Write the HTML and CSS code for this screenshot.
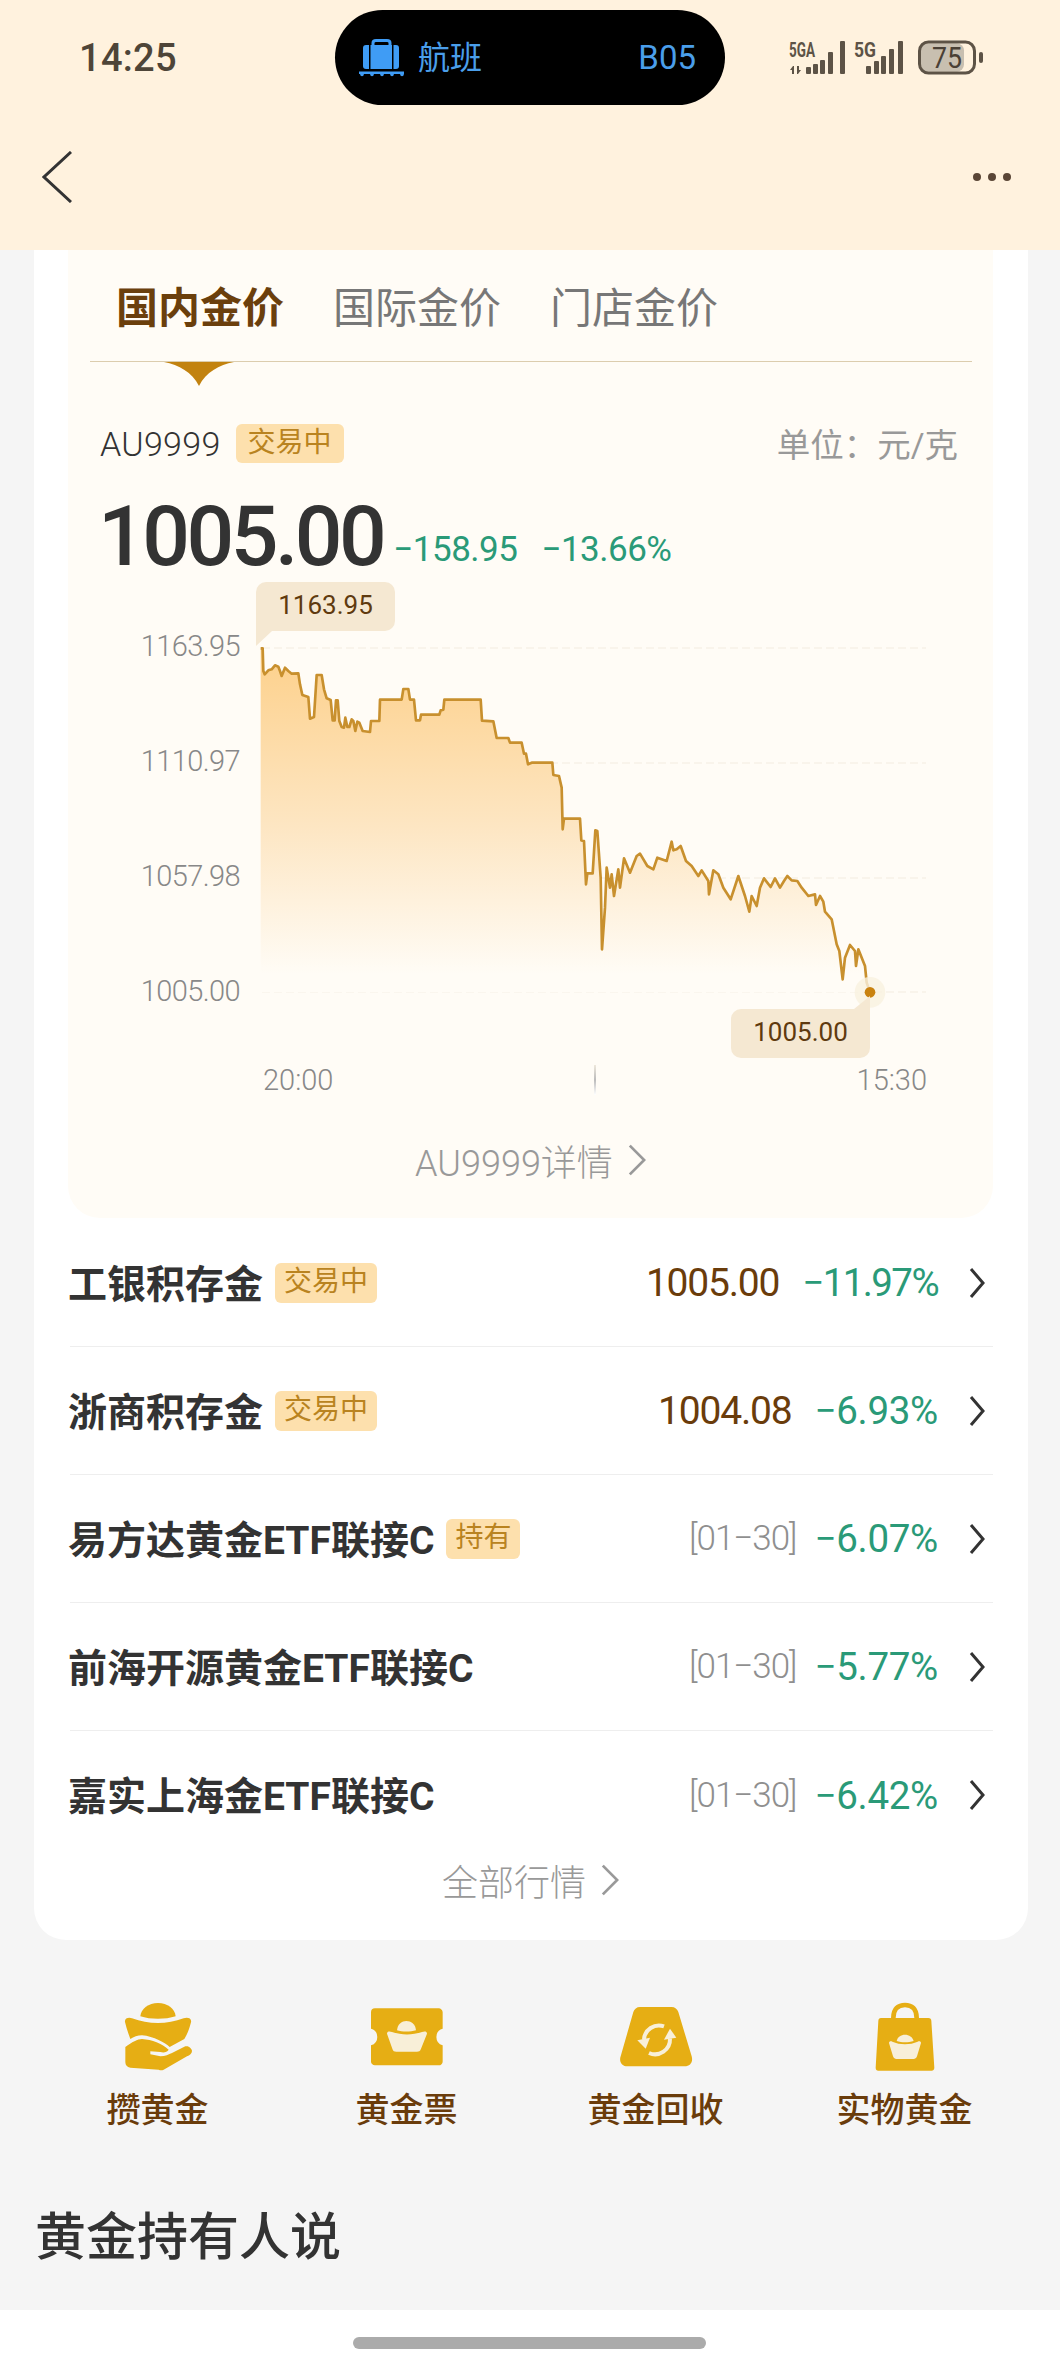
FILE: index.html
```html
<!DOCTYPE html>
<html lang="zh-CN">
<head>
    <meta charset="UTF-8">
    <meta name="viewport" content="width=device-width, initial-scale=1.0">
    <title>黄金行情</title>
    <link rel="stylesheet" href="styles.css">
</head>

<body>
    <header class="top">
        <div class="status">
            <span class="time">14:25</span>
            <div class="pill">
                <svg class="bag-icon" viewBox="356 34 52 44" width="52" height="44">
                    <path d="M373 44V41Q373 38.500 376 38.500H387Q390 38.500 390 41V44" fill="none" stroke="#3f9cf5" stroke-width="3"/>
                    <rect x="363" y="43" width="36" height="24" rx="3" fill="#3f9cf5"/>
                    <rect x="369" y="43" width="1.500" height="24" fill="#000"/>
                    <rect x="392" y="43" width="1.500" height="24" fill="#000"/>
                    <rect x="359" y="69.500" width="45" height="2.500" fill="#3f9cf5"/>
                    <g fill="#3f9cf5">
                        <circle cx="362" cy="72.500" r="1.800"/>
                        <circle cx="372" cy="72.500" r="1.800"/>
                        <circle cx="382" cy="72.500" r="1.800"/>
                        <circle cx="392" cy="72.500" r="1.800"/>
                        <circle cx="402" cy="72.500" r="1.800"/>
                    </g>
                </svg>
                <span class="flight">航班</span>
                <span class="gate">B05</span>
            </div>
            <svg class="status-icons" viewBox="789 38 196 40" width="196" height="40">
                <g fill="#5d5346">
                    <text class="net" x="789" y="57" textLength="26" lengthAdjust="spacingAndGlyphs">5GA</text>
                    <path d="M793 66l-3 4h2v4h2v-8zM798 74l3-4h-2v-4h-2v8z"/>
                    <rect x="806" y="67" width="5" height="7" rx="1"/>
                    <rect x="813" y="64" width="5" height="10" rx="1"/>
                    <rect x="820" y="60" width="5" height="14" rx="1"/>
                    <rect x="828" y="52" width="5" height="22" rx="1"/>
                    <rect x="840" y="41" width="5" height="33" rx="1"/>
                    <text class="net" x="854" y="57" textLength="22" lengthAdjust="spacingAndGlyphs">5G</text>
                    <rect x="866" y="66" width="5" height="8" rx="1"/>
                    <rect x="874" y="61" width="5" height="13" rx="1"/>
                    <rect x="881" y="56" width="5" height="18" rx="1"/>
                    <rect x="889" y="49" width="5" height="25" rx="1"/>
                    <rect x="898" y="41" width="5" height="33" rx="1"/>
                    <rect x="979" y="52" width="4" height="11" rx="2"/>
                </g>
                <rect x="921" y="43.500" width="43" height="28" rx="7" fill="#c8bfb0"/>
                <rect x="919.500" y="42" width="55" height="31" rx="9" fill="none" stroke="#5d5346" stroke-width="3"/>
                <text class="battery" x="932" y="68" textLength="30" lengthAdjust="spacingAndGlyphs">75</text>
            </svg>
        </div>
        <div class="nav">
            <svg viewBox="0 0 30 52" width="30" height="52">
                <path d="M29 1L2 26L29 51" fill="none" stroke="#333" stroke-width="3"/>
            </svg>
            <div class="dots"><i></i><i></i><i></i></div>
        </div>
    </header>

    <main class="card">
        <section class="panel">
            <div class="tabs">
                <span class="tab active">国内金价</span>
                <span class="tab">国际金价</span>
                <span class="tab">门店金价</span>
            </div>
            <svg class="tab-mark" viewBox="0 0 70 24" width="70" height="24">
                <path d="M0 0H70C55 3 42 10 35 24C28 10 15 3 0 0Z" fill="#c2820f"/>
            </svg>

            <div class="info">
                <span class="code">AU9999</span>
                <span class="badge">交易中</span>
                <span class="unit">单位：元/克</span>
            </div>

            <div class="price-line">
                <span class="price">1005.00</span>
                <span class="change">−158.95</span>
                <span class="change second">−13.66%</span>
            </div>

            <div class="chart">
                <div class="y-labels">
                    <span>1163.95</span>
                    <span>1110.97</span>
                    <span>1057.98</span>
                    <span>1005.00</span>
                </div>
                <svg class="plot" viewBox="60 30 2010 1140" width="670" height="380">
                    <defs>
                        <linearGradient id="area" gradientUnits="userSpaceOnUse" x1="0" y1="80" x2="0" y2="1060">
                            <stop offset="0" stop-color="#fdd08a"/>
                            <stop offset="0.55" stop-color="#fde6c3"/>
                            <stop offset="1" stop-color="#fffcf6"/>
                        </linearGradient>
                    </defs>
                    <g stroke="#f3ece0" stroke-width="3" stroke-dasharray="24 12">
                        <path d="M66 81H2058"/>
                        <path d="M66 426H2058"/>
                        <path d="M66 771H2058"/>
                        <path d="M66 1113H2058"/>
                    </g>
                    <path fill="url(#area)" d="M62 82L68 82L70 150L74 160L85 148L95 145L105 133L115 137L120 150L125 165L135 140L145 150L155 158L175 157L180 190L187 222L205 228L210 293L222 288L230 162L245 162L252 205L260 232L272 237L278 298L284 298L288 238L293 238L298 300L305 318L312 320L316 290L322 318L328 318L335 295L340 300L346 330L352 302L358 305L368 330L390 333L393 300L418 300L420 236L485 236L490 204L505 204L510 236L522 236L528 298L540 298L543 281L598 281L602 268L610 266L613 236L722 236L726 299L760 301L770 351L805 351L810 365L845 365L852 398L858 398L864 430L875 425L937 425L940 462L957 465L965 500L968 625L972 593L1020 593L1024 658L1032 660L1038 790L1042 757L1058 757L1066 628L1072 630L1082 770L1086 985L1095 860L1100 740L1110 800L1115 760L1122 825L1135 745L1140 800L1152 712L1170 755L1190 705L1200 698L1222 735L1240 745L1252 710L1280 720L1295 662L1300 688L1310 685L1322 675L1338 720L1355 735L1375 765L1385 748L1405 780L1407 820L1420 748L1435 760L1450 800L1472 835L1495 765L1515 825L1528 872L1535 825L1550 855L1560 800L1572 772L1592 798L1605 772L1620 800L1632 780L1642 765L1655 778L1672 780L1685 800L1705 825L1725 820L1728 852L1740 825L1750 842L1755 872L1775 895L1790 970L1798 990L1808 1075L1815 1010L1830 972L1845 990L1848 1035L1855 985L1875 1035L1880 1085L1890 1114L62 1114Z"/>
                    <path fill="none" stroke="#c8902e" stroke-width="8" stroke-linejoin="round" d="M62 82L68 82L70 150L74 160L85 148L95 145L105 133L115 137L120 150L125 165L135 140L145 150L155 158L175 157L180 190L187 222L205 228L210 293L222 288L230 162L245 162L252 205L260 232L272 237L278 298L284 298L288 238L293 238L298 300L305 318L312 320L316 290L322 318L328 318L335 295L340 300L346 330L352 302L358 305L368 330L390 333L393 300L418 300L420 236L485 236L490 204L505 204L510 236L522 236L528 298L540 298L543 281L598 281L602 268L610 266L613 236L722 236L726 299L760 301L770 351L805 351L810 365L845 365L852 398L858 398L864 430L875 425L937 425L940 462L957 465L965 500L968 625L972 593L1020 593L1024 658L1032 660L1038 790L1042 757L1058 757L1066 628L1072 630L1082 770L1086 985L1095 860L1100 740L1110 800L1115 760L1122 825L1135 745L1140 800L1152 712L1170 755L1190 705L1200 698L1222 735L1240 745L1252 710L1280 720L1295 662L1300 688L1310 685L1322 675L1338 720L1355 735L1375 765L1385 748L1405 780L1407 820L1420 748L1435 760L1450 800L1472 835L1495 765L1515 825L1528 872L1535 825L1550 855L1560 800L1572 772L1592 798L1605 772L1620 800L1632 780L1642 765L1655 778L1672 780L1685 800L1705 825L1725 820L1728 852L1740 825L1750 842L1755 872L1775 895L1790 970L1798 990L1808 1075L1815 1010L1830 972L1845 990L1848 1035L1855 985L1875 1035L1880 1085L1890 1114"/>
                    <circle cx="1890" cy="1114" r="46" fill="#f9f1e0" fill-opacity="0.8"/>
                    <circle cx="1890" cy="1114" r="16" fill="#c9820f"/>
                </svg>
                <span class="tip tip-high">1163.95</span>
                <span class="tip tip-low">1005.00</span>
            </div>

            <div class="x-labels">
                <span>20:00</span>
                <i class="x-mark"></i>
                <span>15:30</span>
            </div>

            <a class="more detail">AU9999详情
                <svg viewBox="0 0 20 34" width="18" height="34"><path d="M2 1L18 17L2 33" fill="none" stroke="#999" stroke-width="3"/></svg>
            </a>
        </section>

        <ul class="list">
            <li class="row">
                <span class="name">工银积存金</span>
                <span class="badge">交易中</span>
                <span class="value">1005.00</span>
                <span class="pct tight">−11.97%</span>
                <svg class="arrow" viewBox="0 0 16 30" width="16" height="30"><path d="M2 1L14 15L2 29" fill="none" stroke="#333" stroke-width="3"/></svg>
            </li>
            <li class="row">
                <span class="name">浙商积存金</span>
                <span class="badge">交易中</span>
                <span class="value">1004.08</span>
                <span class="pct">−6.93%</span>
                <svg class="arrow" viewBox="0 0 16 30" width="16" height="30"><path d="M2 1L14 15L2 29" fill="none" stroke="#333" stroke-width="3"/></svg>
            </li>
            <li class="row">
                <span class="name">易方达黄金ETF联接C</span>
                <span class="badge">持有</span>
                <span class="date">[01−30]</span>
                <span class="pct">−6.07%</span>
                <svg class="arrow" viewBox="0 0 16 30" width="16" height="30"><path d="M2 1L14 15L2 29" fill="none" stroke="#333" stroke-width="3"/></svg>
            </li>
            <li class="row">
                <span class="name">前海开源黄金ETF联接C</span>
                <span class="date">[01−30]</span>
                <span class="pct">−5.77%</span>
                <svg class="arrow" viewBox="0 0 16 30" width="16" height="30"><path d="M2 1L14 15L2 29" fill="none" stroke="#333" stroke-width="3"/></svg>
            </li>
            <li class="row">
                <span class="name">嘉实上海金ETF联接C</span>
                <span class="date">[01−30]</span>
                <span class="pct">−6.42%</span>
                <svg class="arrow" viewBox="0 0 16 30" width="16" height="30"><path d="M2 1L14 15L2 29" fill="none" stroke="#333" stroke-width="3"/></svg>
            </li>
        </ul>

        <a class="more all">全部行情
            <svg viewBox="0 0 20 34" width="18" height="34"><path d="M2 1L18 17L2 33" fill="none" stroke="#999" stroke-width="3"/></svg>
        </a>
    </main>

    <nav class="shortcuts">
        <a class="shortcut">
            <svg viewBox="53 62 240 210" width="80" height="70">
                <g fill="#e6ae14">
                    <path d="M120 108C122 85 145 68 173 68C201 68 224 85 226 108C195 118 150 118 120 108Z"/>
                    <path d="M74 125C72 114 85 110 95 114C145 133 200 133 250 114C262 110 275 114 272 126C268 142 262 160 252 176L208 200C195 188 160 168 125 165C112 165 100 170 90 176C84 160 78 142 74 125Z"/>
                    <path d="M75 200C95 185 112 176 125 176C155 178 185 190 205 208C200 216 190 218 180 215L150 213L150 222L180 228C195 228 205 222 215 218L255 198C265 195 275 205 275 212C275 220 268 225 260 228L190 268C185 270 180 270 175 268L90 262C80 260 75 255 75 245Z"/>
                </g>
            </svg>
            <span>攒黄金</span>
        </a>
        <a class="shortcut">
            <svg viewBox="800 62 240 210" width="80" height="70">
                <path fill="#e6ae14" d="M824 84H1014A12 12 0 0 1 1027 96V145A26 26 0 0 0 1027 195V242A12 12 0 0 1 1014 255H824A12 12 0 0 1 812 242V195A26 26 0 0 0 812 145V96A12 12 0 0 1 824 84Z"/>
                <g fill="#f8efd8">
                    <path d="M890 150C892 130 905 122 918 122C932 122 945 130 947 150C930 155 905 155 890 150Z"/>
                    <path d="M860 160C860 152 868 152 875 155C905 165 935 165 965 155C972 152 980 152 980 160L962 205C960 212 955 214 950 214H888C882 214 878 212 876 205Z"/>
                </g>
            </svg>
            <span>黄金票</span>
        </a>
        <a class="shortcut">
            <svg viewBox="106 62 240 210" width="80" height="70">
                <path fill="#e6ae14" d="M178 80H272C283 80 290 86 293 95L333 228C338 245 328 258 312 258H140C125 258 114 245 120 228L158 95C161 86 168 80 178 80Z"/>
                <g fill="none" stroke="#f8efd8" stroke-width="12">
                    <path d="M250 138A45 45 0 0 0 190 178"/>
                    <path d="M205 218A45 45 0 0 0 268 175"/>
                </g>
                <g fill="#f8efd8">
                    <path d="M170 180L208 172L195 205Z"/>
                    <path d="M287 172L250 178L268 145Z"/>
                </g>
            </svg>
            <span>黄金回收</span>
        </a>
        <a class="shortcut">
            <svg viewBox="850 62 240 210" width="80" height="70">
                <path d="M935 113C935 85 950 74 970 74C990 74 1005 85 1005 113" fill="none" stroke="#e6ae14" stroke-width="14"/>
                <path fill="#e6ae14" d="M898 113H1040C1046 113 1049 117 1049 122L1058 262C1058 268 1054 271 1050 271H890C885 271 882 268 882 262L890 122C890 117 893 113 898 113Z"/>
                <g fill="#f8efd8">
                    <path d="M945 182C947 170 958 163 970 163C982 163 993 170 996 182C980 187 960 187 945 182Z"/>
                    <path d="M922 188C922 183 927 182 932 184C955 194 985 194 1008 184C1013 182 1018 183 1018 188L1006 228C1004 234 1000 236 996 236H944C940 236 936 234 934 228Z"/>
                </g>
            </svg>
            <span>实物黄金</span>
        </a>
    </nav>

    <h2 class="heading">黄金持有人说</h2>

    <footer class="home-bar"><i></i></footer>
</body>

</html>
```

FILE: styles.css
```css
* {
    box-sizing: border-box;
}

body {
    margin: 0;
    width: 1060px;
    height: 2376px;
    overflow: hidden;
    background-color: #f5f5f5;
    color: #333;
    font-family: Roboto, "Noto Sans CJK SC", sans-serif;
}

/* topo */
.top {
    height: 250px;
    background-color: #fff2de;
}

.status {
    display: flex;
    align-items: flex-start;
    padding: 10px 0 0 79px;
}

.time {
    width: 256px;
    margin-top: 30px;
    font-size: 38px;
    line-height: 36px;
    font-weight: 500;
    letter-spacing: 0.300px;
    color: #4e4538;
}

.pill {
    display: flex;
    align-items: center;
    width: 390px;
    height: 95px;
    padding: 0 29px 0 21px;
    border-radius: 48px;
    background-color: #000;
    color: #4a9eea;
}

.bag-icon {
    flex: none;
}

.flight {
    margin: 0 0 5px 10px;
    font-size: 32px;
}

.gate {
    margin-left: auto;
    font-size: 33px;
}

.status-icons {
    margin: 28px 0 0 64px;
}

.net {
    font-size: 20px;
    font-weight: 700;
}

.battery {
    font-size: 30px;
    fill: #4a4035;
}

.nav {
    display: flex;
    align-items: center;
    justify-content: space-between;
    padding: 46px 49px 0 42px;
}

.dots {
    display: flex;
    gap: 7px;
}

.dots i {
    width: 8px;
    height: 8px;
    border-radius: 50%;
    background-color: #5a4636;
}

/* cartao */
.card {
    width: 994px;
    height: 1690px;
    margin-left: 34px;
    padding: 0 35px 0 34px;
    border-radius: 0 0 32px 32px;
    background-color: #fff;
}

.panel {
    height: 968px;
    padding-top: 30px;
    border-radius: 0 0 32px 32px;
    background-color: #fffcf6;
}

.tabs {
    display: flex;
    gap: 49px;
    margin: 0 21px 0 22px;
    padding: 0 0 23px 26px;
    border-bottom: 1px solid #dccdae;
}

.tab {
    font-size: 42px;
    line-height: 58px;
    color: #777;
}

.tab.active {
    font-weight: 700;
    color: #6b3f0c;
}

.tab-mark {
    display: block;
    margin-left: 96px;
}

.info {
    display: flex;
    align-items: center;
    height: 39px;
    margin-top: 38px;
    padding: 0 35px 0 32px;
}

.code {
    font-size: 34px;
    font-weight: 300;
    letter-spacing: 0.300px;
    color: #333;
}

.badge {
    flex: none;
    height: 39px;
    margin-left: 14px;
    padding: 0 9px;
    border-radius: 6px;
    background-color: #fde0ad;
    font-size: 28px;
    line-height: 38px;
    color: #b98320;
}

.info .badge {
    margin-left: 15px;
    padding: 0 12px;
}

.unit {
    margin: 0 0 2px auto;
    font-size: 33.500px;
    color: #999;
}

.price-line {
    display: flex;
    align-items: flex-end;
    margin-top: 32px;
    padding-left: 30px;
}

.price {
    font-size: 84px;
    line-height: 84px;
    font-weight: 500;
    letter-spacing: -3.500px;
    color: #333;
}

.change {
    margin: 0 0 9px 10px;
    font-size: 35px;
    line-height: 40px;
    letter-spacing: -0.500px;
    color: #2a9a78;
}

.change.second {
    margin-left: 24px;
}

/* grafico */
.chart {
    position: relative;
    display: flex;
    width: 830px;
    height: 380px;
    margin: 52px 0 0 72px;
}

.y-labels {
    display: flex;
    flex-direction: column;
    justify-content: space-between;
    width: 100px;
    height: 375px;
    font-size: 29px;
    font-weight: 300;
    line-height: 30px;
    letter-spacing: -0.600px;
    text-align: right;
    color: #888;
}

.plot {
    flex: none;
    margin-left: 20px;
}

.tip {
    position: absolute;
    width: 139px;
    height: 49px;
    background-color: #f5e8d2;
    font-size: 26px;
    line-height: 47px;
    text-align: center;
    color: #5f3a0f;
}

.tip::after {
    content: "";
    position: absolute;
    width: 16px;
    height: 15px;
    background-color: #f5e8d2;
}

.tip-high {
    top: -49px;
    left: 116px;
    border-radius: 10px 10px 10px 0;
}

.tip-high::after {
    top: 49px;
    left: 0;
    clip-path: polygon(0 0, 100% 0, 0 100%);
}

.tip-low {
    top: 378px;
    left: 591px;
    border-radius: 10px 0 10px 10px;
}

.tip-low::after {
    top: -13px;
    right: 0;
    height: 13px;
    clip-path: polygon(100% 0, 100% 100%, 0 100%);
}

.x-labels {
    display: flex;
    align-items: center;
    justify-content: space-between;
    width: 664px;
    height: 30px;
    margin: 54px 0 0 195px;
    font-size: 29px;
    font-weight: 300;
    color: #888;
}

.x-mark {
    width: 2px;
    height: 30px;
    background: linear-gradient(#eee8dc, #bbb, #fff);
}

.more {
    display: flex;
    align-items: center;
    justify-content: center;
    gap: 15px;
    font-size: 36px;
    font-weight: 300;
    color: #999;
}

.detail {
    height: 48px;
    margin-top: 41px;
}

/* lista */
.list {
    margin: 1px 0 0 0;
    padding: 0 0 0 2px;
    list-style: none;
}

.row {
    display: flex;
    align-items: center;
    height: 128px;
    padding-right: 8px;
    border-bottom: 1px solid #eee;
}

.row:last-child {
    border-bottom: none;
}

.name {
    margin: 0 0 4px -2px;
    font-size: 39px;
    font-weight: 700;
    color: #333;
}

.row .badge {
    height: 40px;
    margin-left: 12px;
}

.value {
    margin-left: auto;
    font-size: 39px;
    letter-spacing: -1.200px;
    color: #6a3c0b;
}

.date {
    margin: 0 -5px 0 auto;
    font-size: 35px;
    font-weight: 300;
    letter-spacing: -1px;
    color: #8f8f8f;
}

.pct {
    margin-left: 23px;
    font-size: 38.500px;
    letter-spacing: -0.300px;
    color: #2a9a78;
}

.pct.tight {
    letter-spacing: -1.600px;
}

.arrow {
    flex: none;
    margin-left: 31px;
}

.all {
    height: 42px;
}

/* atalhos */
.shortcuts {
    display: grid;
    grid-template-columns: repeat(4, 249px);
    margin: 61px 0 0 33px;
}

.shortcut {
    display: flex;
    flex-direction: column;
    align-items: center;
}

.shortcut span {
    margin-top: 17px;
    font-size: 34px;
    line-height: 44px;
    font-weight: 500;
    color: #6a3c0b;
}

.heading {
    height: 102px;
    margin: 76px 0 0 35px;
    font-size: 51px;
    line-height: 60px;
    font-weight: 500;
    color: #333;
}

.home-bar {
    height: 66px;
    padding: 27px 0 0 353px;
    background-color: #fff;
}

.home-bar i {
    display: block;
    width: 353px;
    height: 12px;
    border-radius: 6px;
    background-color: #ababab;
}
```
